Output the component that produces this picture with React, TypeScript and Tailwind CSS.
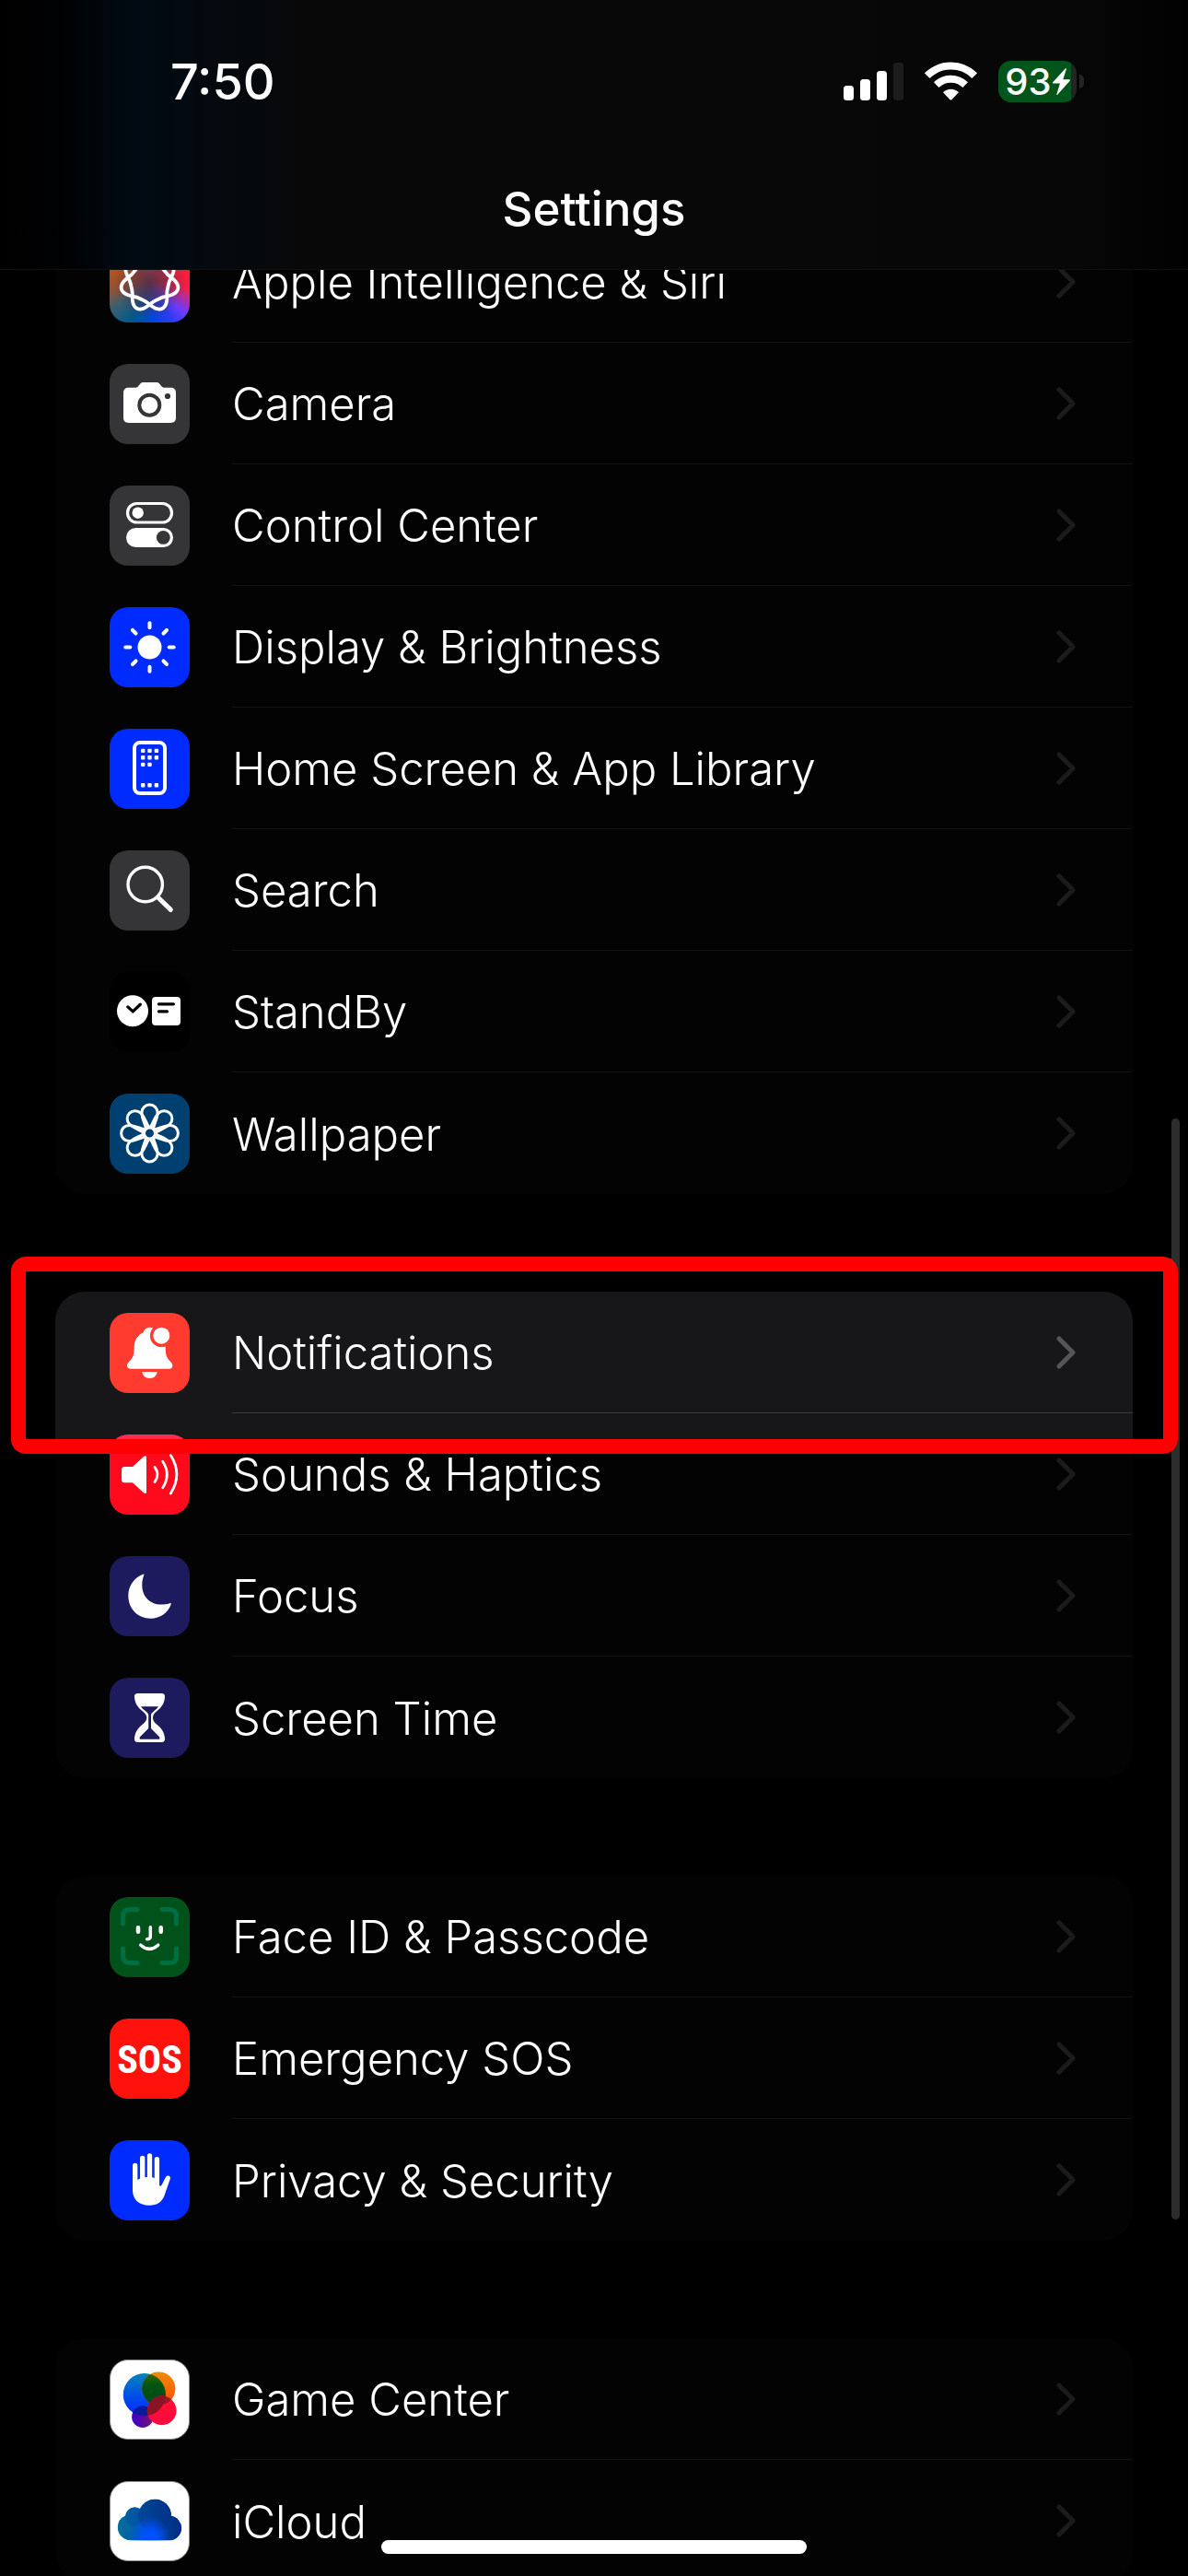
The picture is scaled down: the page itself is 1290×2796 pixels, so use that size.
import React from 'react';
import { clsx } from 'clsx';

interface Row {
  label: string;
  tile: string;
  icon: React.ReactNode;
  highlighted?: boolean;
  partlyLit?: boolean;
}

const Glyph: React.FC<{ children: React.ReactNode }> = ({ children }) => (
  <svg viewBox="0 0 87 87" className="w-full h-full" fill="none" stroke="none" strokeLinecap="round" strokeLinejoin="round" aria-hidden="true">
    {children}
  </svg>
);

// Seven-lobed closed curve, goes round the centre twice
const siriPath = (() => {
  const points: string[] = [];
  for (let i = 0; i < 280; i++) {
    const t = (i / 280) * Math.PI * 4;
    const r = 25 + 5.5 * Math.cos(3.5 * t) + Math.cos(7 * t);
    points.push(`${(43.5 + r * Math.sin(t)).toFixed(2)} ${(43.5 - r * Math.cos(t)).toFixed(2)}`);
  }
  return `M${points.join('L')}Z`;
})();

const SiriIcon = () => (
  <Glyph>
    <path d={siriPath} stroke="white" strokeWidth="3.8" />
  </Glyph>
);

const CameraIcon = () => (
  <Glyph>
    <path d="M21 25.7H28C30.5 25.7 31 24.5 32.5 22.5C34 20.5 35 20 37 20H50.5C52.5 20 53.5 20.5 55 22.5C56.5 24.5 57 25.7 59.5 25.7H66C70 25.7 72 27.7 72 31.5V58.3C72 62.2 70 64 66 64H21C17 64 15 62.2 15 58.3V31.5C15 27.7 17 25.7 21 25.7Z" fill="white" />
    <circle cx="43.3" cy="44.7" r="11" stroke="#353537" strokeWidth="4" />
    <circle cx="63" cy="35" r="3.1" fill="#353537" />
  </Glyph>
);

const ControlCenterIcon = () => (
  <Glyph>
    <rect x="19.5" y="19.5" width="48" height="20.5" rx="10.2" stroke="white" strokeWidth="3.2" />
    <circle cx="30.7" cy="29.7" r="6.2" fill="white" />
    <rect x="18" y="46" width="51" height="21" rx="10.5" fill="white" />
    <circle cx="58.3" cy="56.4" r="7.4" fill="#353537" />
  </Glyph>
);

const SunIcon = () => (
  <Glyph>
    <circle cx="43.5" cy="43.5" r="13" fill="white" />
    {[0, 45, 90, 135, 180, 225, 270, 315].map((angle) => (
      <path key={angle} d="M43.5 17.3V22.3" stroke="white" strokeWidth="4" transform={`rotate(${angle} 43.5 43.5)`} />
    ))}
  </Glyph>
);

const HomeScreenIcon = () => (
  <Glyph>
    <rect x="27" y="15" width="33" height="55" rx="6" stroke="white" strokeWidth="4" />
    {[[34, 21.7], [41.3, 21.7], [48.7, 21.7], [34, 29], [41.3, 29], [48.7, 29], [34, 36.7], [41.3, 36.7], [34, 59], [41.3, 59], [48.7, 59]].map(([x, y]) => (
      <rect key={`${x}-${y}`} x={x} y={y} width="4.4" height="4.4" rx="1" fill="white" />
    ))}
  </Glyph>
);

const SearchIcon = () => (
  <Glyph>
    <circle cx="38.7" cy="37" r="18.7" stroke="white" strokeWidth="3.4" />
    <path d="M52.5 51L66.3 64.4" stroke="white" strokeWidth="5" />
  </Glyph>
);

const StandByIcon = () => (
  <Glyph>
    <circle cx="25" cy="42.3" r="17" fill="white" />
    <path d="M19.8 37.9L25.3 42.9L33.3 35.2" stroke="black" strokeWidth="3.3" />
    <rect x="46" y="27" width="31" height="31" rx="4" fill="white" />
    <path d="M53.4 34.8H69.4M53.4 42.8H62.6" stroke="black" strokeWidth="3.3" />
  </Glyph>
);

const WallpaperIcon = () => (
  <Glyph>
    {[0, 45, 90, 135, 180, 225, 270, 315].map((angle) => (
      <path
        key={angle}
        d="M39.500 38.500C38.500 32.500 34.900 28.500 34.900 21.200A8.600 8.600 0 0 1 52.100 21.200C52.100 28.500 48.500 32.500 47.500 38.500"
        stroke="white"
        strokeWidth="3"
        transform={`translate(0 -.5) rotate(${angle} 43.5 43.5)`}
      />
    ))}
    <circle cx="43.5" cy="43" r="6.2" stroke="white" strokeWidth="3.4" />
  </Glyph>
);

const BellIcon = () => (
  <Glyph>
    <path d="M43.7 15.7C40 15.7 37.5 18 36.5 21.5C30 24 27 30 26.7 37C26.4 45 26 48 22 52C20 54 19 55.5 19 57.5C19 59.5 20.5 60.7 22.5 60.7H65C67 60.7 68.3 59.5 68.3 57.5C68.3 55.5 67.3 54 65.3 52C61.3 48 61 45 60.6 37C60.3 30 57.3 24 50.8 21.5C49.8 18 47.4 15.7 43.7 15.7Z" fill="white" />
    <path d="M35.3 64H51.7C51.2 68.2 48 71 43.5 71C39 71 35.8 68.2 35.3 64Z" fill="white" />
    <circle cx="56.3" cy="24.7" r="12.4" fill="#ff3a2f" />
    <circle cx="56.3" cy="24.7" r="9" fill="white" />
  </Glyph>
);

const SpeakerIcon = () => (
  <Glyph>
    <path d="M16 35H25L37 24C38.5 22.8 40 23 40 24.8V62.5C40 64.3 38.5 64.5 37 63.3L25 52.3H16C14 52.3 13 51 13 49V38.3C13 36.3 14 35 16 35Z" fill="white" />
    <path d="M49 35.4Q55 43.4 49 51.6M57.7 29.2Q67 43.4 57.7 57.8M66.3 22.6Q79.5 43.4 66.3 64" stroke="white" strokeWidth="2.8" />
  </Glyph>
);

const MoonIcon = () => (
  <Glyph>
    <path d="M37 19.5C27 23 20.3 32 20.3 43C20.3 57 30.5 67.7 44.5 67.7C55 67.7 63.5 61.5 66.8 52C67 51 66.5 50.8 65.5 51.2C62 52.3 59 52.6 56 52.6C43.5 52.6 35.3 43.5 35.3 31.5C35.3 27.5 36 24 37.3 20.5C37.6 19.6 37.5 19.3 37 19.5Z" fill="white" />
  </Glyph>
);

const HourglassIcon = () => (
  <Glyph>
    <path d="M30.5 17H56.5C59 17 60.2 18.5 60 21C59.4 28.5 56 32.5 51 36.5C48 39 47 41 47 43.4C47 46 48 48 51 50.5C56 54.5 59.4 58.5 60 66C60.2 68.5 59 70 56.5 70H30.5C28 70 26.8 68.5 27 66C27.6 58.5 31 54.5 36 50.5C39 48 40.3 46 40.3 43.4C40.3 41 39 39 36 36.5C31 32.5 27.6 28.5 27 21C26.8 18.5 28 17 30.5 17Z" fill="white" />
    <path d="M34 31.3H53C51.5 33.6 49 35.5 47.2 37C45.8 38.2 45 39.3 45 41V55L54.3 64.5V66.8H32.7V64.5L42.2 55V41C42.2 39.3 41.3 38.2 40 37C38.2 35.5 35.5 33.6 34 31.3Z" fill="#1d1a5e" />
  </Glyph>
);

const FaceIdIcon = () => (
  <Glyph>
    <path d="M14.5 29V21Q14.5 13.5 22 13.5H30M57 13.5H65Q72.5 13.5 72.5 21V29M72.5 56V64Q72.5 71.5 65 71.5H57M30 71.5H22Q14.5 71.5 14.5 64V56" stroke="#006e42" strokeWidth="5" />
    <path d="M31 33.3V37.7M55.7 33.3V37.7" stroke="white" strokeWidth="4.5" />
    <path d="M44.3 32.8V43Q44.3 45.7 40.6 45.7M33.8 52.2Q43.3 60.6 52.7 52.2" stroke="white" strokeWidth="3.5" />
  </Glyph>
);

const SosIcon = () => (
  <span className="font-['Liberation_Sans_Narrow','Roboto_Condensed','Open_Sans_Condensed','DejaVu_Sans_Condensed',sans-serif] pt-1 font-bold text-[42px] leading-none text-white">
    SOS
  </span>
);

const HandIcon = () => (
  <Glyph>
    <path d="M27.7 45V27.3M35.7 45V19.3M43.5 45V17M51.4 50V20.7" stroke="white" strokeWidth="5.3" />
    <path d="M25 43L30.3 43C31 42.3 32 42 33 41.8L38.3 40.3L41 40L46 40.3L49 41L54 48C54 50.3 55.7 50.3 56.6 48.5L61 40C62.5 37 67 38.5 65.8 42L59.5 60C57 67 51.5 70.7 43 70.7C32 70.7 25.5 64.5 25 55Z" fill="white" />
  </Glyph>
);

const GameCenterIcon = () => (
  <Glyph>
    <defs>
      <linearGradient id="gc-blue" x1="0" y1="0" x2="0" y2="1">
        <stop offset="0" stopColor="#0084b8" />
        <stop offset=".6" stopColor="#0048ee" />
        <stop offset="1" stopColor="#0028ff" />
      </linearGradient>
      <linearGradient id="gc-orange" x1="0" y1="0" x2="0" y2="1">
        <stop offset="0" stopColor="#f08c00" />
        <stop offset="1" stopColor="#ff4a08" />
      </linearGradient>
      <linearGradient id="gc-green" x1="0" y1="0" x2="0" y2="1">
        <stop offset="0" stopColor="#3c6a00" />
        <stop offset=".4" stopColor="#005510" />
        <stop offset="1" stopColor="#004820" />
      </linearGradient>
      <linearGradient id="gc-purple">
        <stop offset="0" stopColor="#3a00d0" />
        <stop offset="1" stopColor="#7a1464" />
      </linearGradient>
      <linearGradient id="gc-red" x1="0" y1="0" x2="0" y2="1">
        <stop offset="0" stopColor="#ff1430" />
        <stop offset="1" stopColor="#ff0840" />
      </linearGradient>
      <clipPath id="gc-clip-blue"><circle cx="37.7" cy="38" r="23.6" /></clipPath>
      <clipPath id="gc-clip-orange"><circle cx="53.5" cy="31.3" r="18.6" /></clipPath>
    </defs>
    <circle cx="37.7" cy="38" r="23.6" fill="url(#gc-blue)" />
    <circle cx="53.5" cy="31.3" r="18.6" fill="url(#gc-orange)" />
    <circle cx="53.5" cy="31.3" r="18.6" fill="url(#gc-green)" clipPath="url(#gc-clip-blue)" />
    <circle cx="35.7" cy="62.7" r="12" fill="url(#gc-purple)" />
    <circle cx="35.7" cy="62.7" r="12" fill="#0a1a9a" clipPath="url(#gc-clip-blue)" />
    <circle cx="57" cy="55.7" r="16.2" fill="url(#gc-red)" />
    <circle cx="57" cy="55.7" r="16.2" fill="#a01428" clipPath="url(#gc-clip-orange)" />
    <circle cx="57" cy="55.7" r="16.2" fill="#8c1226" clipPath="url(#gc-clip-blue)" />
  </Glyph>
);

const CloudIcon = () => (
  <Glyph>
    <defs>
      <linearGradient id="cloud-base" gradientUnits="userSpaceOnUse" x1="8" y1="0" x2="79" y2="0">
        <stop offset="0" stopColor="#00709a" />
        <stop offset=".35" stopColor="#005aae" />
        <stop offset=".6" stopColor="#0044a0" />
        <stop offset="1" stopColor="#002c80" />
      </linearGradient>
      <radialGradient id="cloud-glow" gradientUnits="userSpaceOnUse" cx="44" cy="60" r="22">
        <stop offset="0" stopColor="#0050ff" />
        <stop offset=".35" stopColor="#0050ff" stopOpacity=".9" />
        <stop offset="1" stopColor="#0050ff" stopOpacity="0" />
      </radialGradient>
      <clipPath id="cloud-clip">
        <circle cx="22.3" cy="50.5" r="14.3" />
        <circle cx="49.3" cy="37.3" r="18.3" />
        <circle cx="65.3" cy="51.2" r="13.7" />
        <circle cx="26.9" cy="38.5" r="10.5" />
        <rect x="22" y="40" width="43" height="24.9" />
      </clipPath>
    </defs>
    <g clipPath="url(#cloud-clip)">
      <rect width="87" height="87" fill="url(#cloud-base)" />
      <circle cx="26.9" cy="38.5" r="10.5" fill="#00408a" fillOpacity=".25" />
      <circle cx="49.3" cy="37.3" r="18.3" fill="#00307c" fillOpacity=".45" />
      <rect width="87" height="87" fill="url(#cloud-glow)" />
    </g>
  </Glyph>
);

const groups: Row[][] = [
  [
    {
      label: 'Apple Intelligence & Siri',
      tile: 'bg-[radial-gradient(circle,#5a3048_0%,#5a304899_30%,transparent_65%),conic-gradient(#d04a50,#ff1a3c_80deg,#f0204e_100deg,#6a3cff_132deg,#2a3cf0_150deg,#0046e0_175deg,#00588a_205deg,#3a6070_235deg,#8a5438_255deg,#b8521a_290deg,#d04a50)]',
      icon: <SiriIcon />,
    },
    { label: 'Camera', tile: 'bg-[#353537]', icon: <CameraIcon /> },
    { label: 'Control Center', tile: 'bg-[#353537]', icon: <ControlCenterIcon /> },
    { label: 'Display & Brightness', tile: 'bg-[#002bff]', icon: <SunIcon /> },
    { label: 'Home Screen & App Library', tile: 'bg-[#002bff]', icon: <HomeScreenIcon /> },
    { label: 'Search', tile: 'bg-[#353537]', icon: <SearchIcon /> },
    { label: 'StandBy', tile: 'bg-black', icon: <StandByIcon /> },
    { label: 'Wallpaper', tile: 'bg-[#004071]', icon: <WallpaperIcon /> },
  ],
  [
    { label: 'Notifications', tile: 'bg-[#ff3a2f]', icon: <BellIcon />, highlighted: true },
    { label: 'Sounds & Haptics', tile: 'bg-[linear-gradient(#ff2d55_6px,#ff0a1c_6px)]', icon: <SpeakerIcon />, partlyLit: true },
    { label: 'Focus', tile: 'bg-[#1d1a5e]', icon: <MoonIcon /> },
    { label: 'Screen Time', tile: 'bg-[#1d1a5e]', icon: <HourglassIcon /> },
  ],
  [
    { label: 'Face ID & Passcode', tile: 'bg-[#00511a]', icon: <FaceIdIcon /> },
    { label: 'Emergency SOS', tile: 'bg-[#ff120c]', icon: <SosIcon /> },
    { label: 'Privacy & Security', tile: 'bg-[#002bff]', icon: <HandIcon /> },
  ],
  [
    { label: 'Game Center', tile: 'bg-white border border-[#8a8a8a]', icon: <GameCenterIcon /> },
    { label: 'iCloud', tile: 'bg-white border border-[#8a8a8a]', icon: <CloudIcon /> },
  ],
];

const SettingsRow: React.FC<{ row: Row; last: boolean }> = ({ row, last }) => (
  <li>
    <button
      type="button"
      className={clsx(
        'flex w-full h-[132px] items-center pl-[59px] text-left',
        row.highlighted && 'bg-[#171719]',
        row.partlyLit && 'bg-[linear-gradient(#171719_28px,transparent_28px)]'
      )}
    >
      <span className={clsx('flex size-[87px] shrink-0 items-center justify-center overflow-hidden rounded-[20px]', row.tile)}>
        {row.icon}
      </span>
      <span
        className={clsx(
          'ml-[46px] flex flex-1 items-center justify-between self-stretch pr-[62px]',
          !last && 'border-b',
          row.highlighted ? 'border-[#3b3b3e]' : 'border-[#121212]'
        )}
      >
        <span className="pt-[3px] text-[49px] leading-[60px] font-light text-white">{row.label}</span>
        <svg
          viewBox="0 0 21 36"
          className={clsx('h-[36px] w-[21px]', row.highlighted ? 'text-[#56565a]' : 'text-[#1b1b1b]')}
          fill="none"
          stroke="currentColor"
          strokeWidth="5"
          strokeLinecap="round"
          strokeLinejoin="round"
          aria-hidden="true"
        >
          <path d="M3 3L18 18L3 33" />
        </svg>
      </span>
    </button>
  </li>
);

const StatusBar = () => (
  <div className="flex h-[176px] items-center justify-between pl-[185px] pr-[113px]">
    <span className="pt-[2px] text-[54px] leading-[60px] font-medium">7:50</span>
    <div className="flex items-center">
      <svg viewBox="0 0 65 41" className="h-[41px] w-[65px]" fill="white" aria-label="Signal">
        <rect y="25" width="11" height="16" rx="3.5" />
        <rect x="18" y="18" width="11" height="23" rx="3.5" />
        <rect x="36" y="9" width="11" height="32" rx="3.5" />
        <rect x="54" width="11" height="41" rx="3.5" fill="#1c1c1c" />
      </svg>
      <svg viewBox="0 0 57 42" className="ml-[23px] h-[42px] w-[57px]" fill="none" stroke="white" aria-label="Wi-Fi">
        <path d="M2.8 15.2A36.5 36.5 0 0 1 54.2 15.2" strokeWidth="8" />
        <path d="M12.8 25.2A22.3 22.3 0 0 1 44.2 25.2" strokeWidth="8" />
        <path d="M20 33.2A12 12 0 0 1 37 33.2L29.6 41Q28.5 42 27.4 41Z" fill="white" stroke="none" />
      </svg>
      <div className="ml-[23px] flex items-center">
        <div className="flex h-[45px] w-[85px] items-center justify-center rounded-[14px] bg-[linear-gradient(90deg,#00551a_79px,#242424_79px)]">
          <span className="text-[40px] leading-[45px] font-medium">93</span>
          <svg viewBox="0 0 19 29" className="ml-[1px] h-[29px] w-[19px]" fill="white" aria-label="Charging">
            <path d="M14 .3L0 15.5Q-.3 16.6 .8 16.6H8L4.3 28.4Q4.5 29.3 5.3 28.7L18.9 13.5Q19.2 12.3 18 12.3H11.3L15 .8Q14.8 0 14 .3Z" />
          </svg>
        </div>
        <span className="ml-[3px] h-[15px] w-[5px] rounded-r-full bg-[#242424]" />
      </div>
    </div>
  </div>
);

const App: React.FC = () => {
  return (
    <div className="relative flex h-screen flex-col overflow-hidden bg-black font-['Inter','Liberation_Sans',sans-serif] text-white">
      <header className="shrink-0 border-b border-[#111111] bg-[linear-gradient(90deg,#000000,#010204_6%,#010a12_11%,#030a10_16%,#080808_26%,#070707_90%,#010101)]">
        <StatusBar />
        <h1 className="pb-[14px] text-center text-[51px] leading-[102px] font-medium">Settings</h1>
      </header>

      <main className="flex-1 overflow-hidden">
        {/* List is scrolled, so the first row sits partly under the header */}
        <div className="-mt-[53px] flex flex-col gap-[106px] px-[60px]">
          {groups.map((rows, index) => (
            <section key={index} className="relative">
              <ul className="overflow-hidden rounded-[32px] bg-[#030303]">
                {rows.map((row, i) => (
                  <SettingsRow key={row.label} row={row} last={i === rows.length - 1} />
                ))}
              </ul>
              {rows.some((row) => row.highlighted) && (
                <div className="pointer-events-none absolute -top-[38px] -left-[48px] -right-[49px] z-10 h-[214px] rounded-[16px] border-[16px] border-[#ff0000]" />
              )}
            </section>
          ))}
        </div>
      </main>

      {/* Scroll indicator */}
      <div className="absolute top-[1214px] right-[9px] h-[1195px] w-[9px] rounded-full bg-[#2d2d2d]" />
      {/* Home indicator */}
      <div className="absolute bottom-[24px] left-1/2 h-[15px] w-[462px] -translate-x-1/2 rounded-full bg-white" />
    </div>
  );
};

export default App;
